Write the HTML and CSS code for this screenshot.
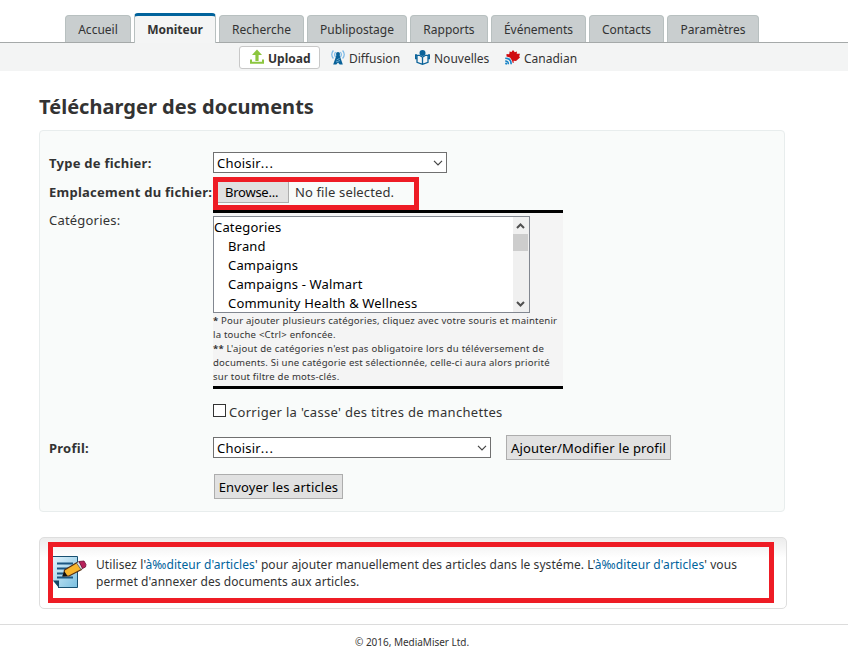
FILE: index.html
```html
<!DOCTYPE html>
<html lang="fr">
<head>
<meta charset="utf-8">
<title>Télécharger des documents</title>
<link rel="stylesheet" href="styles.css">
</head>
<body>
<nav class="tabs">
  <a class="tab t-accueil">Accueil</a>
  <a class="tab t-moniteur active">Moniteur</a>
  <a class="tab t-recherche">Recherche</a>
  <a class="tab t-publipostage">Publipostage</a>
  <a class="tab t-rapports">Rapports</a>
  <a class="tab t-evenements">Événements</a>
  <a class="tab t-contacts">Contacts</a>
  <a class="tab t-parametres">Paramètres</a>
</nav>
<nav class="subnav">
  <a class="sub selected">
    <svg width="14" height="16" viewBox="0 0 14 16"><path fill="#8cc63f" d="M7 0.500 12 6H8.600v6H5.400V6H2z"/><path fill="none" stroke="#8cc63f" stroke-width="2" d="M1 10.500v3.200h12v-3.200"/></svg>
    <span>Upload</span>
  </a>
  <a class="sub diffusion">
    <svg width="14" height="15" viewBox="0 0 14 15"><path fill="none" stroke="#7ab8e6" stroke-width="1.2" d="M2.400.500Q-.900 4.500 2.400 8.500M4.600 2Q2.700 4.500 4.600 7M11.600.500q3.300 4-0 8M9.400 2q1.900 2.500 0 5"/><circle cx="7" cy="4" r="2" fill="#0a6299"/><path fill="#0a6299" d="M5.500 5h3L11.800 14.500H8.700L7 12.500l-1.700 2H2.200z"/><path stroke="#8dc4e4" stroke-width=".7" d="m5.500 10 3-1.500M5 12l4-1.500"/></svg>
    <span>Diffusion</span>
  </a>
  <a class="sub nouvelles">
    <svg width="15" height="15" viewBox="0 0 15 15"><circle cx="7.500" cy="3" r="3" fill="#0a6299"/><path fill="none" stroke="#0a6299" stroke-width="1.300" d="M7.500 7.200 4.500 5.300H2v7l5.500 2 5.500-2v-7h-2.500zM7.500 7v7M2 8.500H.6V5H2M13 8.500h1.400V5H13"/></svg>
    <span>Nouvelles</span>
  </a>
  <a class="sub canadian">
    <svg width="15" height="15" viewBox="0 0 15 15"><path fill="#d00a10" d="M8 0 9.800 2.300 12 1.500l-.3 2.300L15 3.800l-.8 2.500.8 1.200-4 3.500-2.400-.2V13H7.800L7 10.500 5 7.500 1.500 6.500V4l2.500.3.500-1L4.500 1.500 6.500 2z"/><path fill="none" stroke="#1884c7" stroke-width="1.500" d="M.2 8.200q6 0 6 6M.2 11q3.200 0 3.200 3.200"/><circle cx="1.200" cy="13.600" r="1.100" fill="#1884c7"/></svg>
    <span>Canadian</span>
  </a>
</nav>
<main>
  <h1><span>Télécharger des documents</span></h1>
  <form class="panel">
    <div class="row type-row">
      <label class="bold">Type de fichier:</label>
      <div class="select type"><span>Choisir<i>...</i></span><svg width="10" height="6" viewBox="0 0 10 6"><path d="m1 .8 4 4 4-4"/></svg></div>
    </div>
    <div class="row file-row">
      <label class="bold file-label">Emplacement du fichier:</label>
      <div class="file"><span class="browse">Browse...</span><span class="nofile">No file selected.</span><div class="mark mark-file"></div></div>
    </div>
    <div class="row cat-row">
      <label>Catégories:</label>
      <div class="categories">
        <div class="list">
          <ul>
            <li class="root">Categories</li>
            <li>Brand</li>
            <li>Campaigns</li>
            <li>Campaigns - Walmart</li>
            <li>Community Health &amp; Wellness</li>
          </ul>
          <div class="scroll">
            <svg width="9" height="6" viewBox="0 0 9 6"><path d="m1 5 3.500-3.500L8 5"/></svg>
            <div class="thumb"></div>
            <svg width="9" height="6" viewBox="0 0 9 6"><path d="m1 1 3.500 3.500L8 1"/></svg>
          </div>
        </div>
        <p class="note"><b>*</b> Pour ajouter plusieurs catégories, cliquez avec votre souris et maintenir<br>la touche &lt;Ctrl&gt; enfoncée.<br><b>**</b> <span class="wide">L'ajout de catégories n'est pas obligatoire lors du téléversement de</span><br>documents. Si une catégorie est sélectionnée, celle-ci aura alors priorité<br>sur tout filtre de mots-clés.</p>
      </div>
    </div>
    <div class="row check-row">
      <span class="box"></span><span>Corriger la 'casse' des titres de manchettes</span>
    </div>
    <div class="row profile-row">
      <label class="bold">Profil:</label>
      <div class="select profile"><span>Choisir<i>...</i></span><svg width="10" height="6" viewBox="0 0 10 6"><path d="m1 .8 4 4 4-4"/></svg></div>
      <button type="button" class="edit">Ajouter/Modifier le profil</button>
    </div>
    <div class="row"><button type="button" class="send">Envoyer les articles</button></div>
  </form>
  <section class="info">
    <svg class="doc" width="34" height="34" viewBox="0 0 34 34">
      <defs><linearGradient id="paper" x1="0" y1="0" x2="1" y2="1"><stop offset="0" stop-color="#e2f3fb"/><stop offset="1" stop-color="#79bfe0"/></linearGradient></defs>
      <path fill="url(#paper)" d="M0 .5h24.500v31H6L0 25z"/>
      <path fill="none" stroke="#174f70" d="M0 .5h24.500v31H5"/>
      <path fill="#154766" d="M0 24.500h6v7.500z"/>
      <path stroke="#1b5680" stroke-width="2" d="M4 7.500h16M4 12.500h12M4 17.500h7M4 21.500h16"/>
      <path fill="#f7b52c" stroke="#573014" stroke-width="1.200" d="M11.500 14 24 6.500l4.500 7L16 20l-5.500 0z"/>
      <path fill="#111" d="m9 20.500 2.500-5 3 4.500z"/>
      <path fill="#d9dfe2" stroke="#555" stroke-width=".7" d="m23.500 7 2.500-1.500 4 6.500-2 1.500z"/>
      <path fill="#b8215a" stroke="#6e1236" stroke-width=".8" d="m26 5.500 5-.5 2 3.500-.5 2.500-3 1.500z"/>
    </svg>
    <p><span class="line1">Utilisez l'<a>à‰diteur d'articles</a>' pour ajouter manuellement des articles dans le systéme. L'<a>à‰diteur d'articles</a>' vous</span><br><span class="line2">permet d'annexer des documents aux articles.</span></p>
    <div class="mark mark-info"></div>
  </section>
</main>
<footer><span>© 2016, MediaMiser Ltd.</span></footer>
</body>
</html>
```

FILE: styles.css
```css
* { box-sizing: border-box; }
body { margin: 0; height: 665px; overflow: hidden; background: #fff; color: #333; font: 13px/18px "Noto Sans", "Open Sans", sans-serif; }
svg { display: block; flex: none; }
h1, p, ul { margin: 0; padding: 0; }
a { color: inherit; text-decoration: none; white-space: nowrap; }

.tabs { display: flex; align-items: flex-end; gap: 3px; height: 43px; padding-left: 65px; border-bottom: 1px solid #a5a9a9; font-size: 12px; }
.tab { display: flex; justify-content: center; height: 27px; padding-top: 5px; background: #c9cecf; border: 1px solid #b8c0c0; border-bottom: 0; border-radius: 4px 4px 0 0; }
.tab.active { height: 30px; margin-bottom: -1px; padding-top: 5px; background: #f4f5f5; border-top: 3px solid #00639c; font-weight: bold; }
.t-accueil { width: 66px; }
.t-moniteur { width: 82px; }
.t-recherche { width: 85px; }
.t-publipostage { width: 100px; }
.t-rapports { width: 78px; }
.t-evenements { width: 95px; }
.t-contacts { width: 75px; }
.t-parametres { width: 92px; }

.subnav { display: flex; height: 28px; padding: 3px 0 0 239px; background: #f3f4f4; font-size: 12px; }
.sub { display: flex; align-items: center; height: 24px; gap: 4px; }
.sub span { padding-top: 2px; }
.sub svg { margin-top: -1px; }
.selected { width: 81px; height: 23px; padding-left: 10px; gap: 4px; background: #fff; border: 1px solid #c8c8c8; border-radius: 3px; font-weight: bold; }
.diffusion { width: 85px; padding-left: 11px; }
.nouvelles { width: 89px; padding-left: 10px; }
.canadian { padding-left: 11px; }

main { width: 848px; padding: 23px 0 0 39px; }
h1 { height: 36px; font-size: 20px; line-height: 26px; letter-spacing: .03px; }
.panel { width: 746px; height: 382px; padding: 21px 0 0 9px; background: #f9fbfa; border: 1px solid #e8eded; border-radius: 4px; }
.row { display: flex; }
.row label { width: 164px; flex: none; white-space: nowrap; letter-spacing: .2px; }
.row .bold { font-weight: bold; letter-spacing: .25px; }
.type-row { height: 28px; }
.type-row label { padding-top: 2px; }
.file-row label { padding-top: 3px; }
.select { display: flex; justify-content: space-between; align-items: center; height: 21px; padding: 0 3px; background: #fff; border: 1px solid #707070; color: #000; letter-spacing: .2px; }
.select i { font-style: normal; letter-spacing: .8px; }
.select svg path { fill: none; stroke: #444; stroke-width: 1.2; }
.type { width: 234px; }
.profile { width: 278px; }
.file-row { height: 30px; }
.file { position: relative; display: flex; height: 23px; padding-left: 4px; margin-top: 1px; }
.browse { width: 72px; height: 22px; padding-left: 7px; background: #e1e1e1; border: 1px solid #adadad; color: #000; line-height: 20px; letter-spacing: -.25px; }
.nofile { padding-left: 6px; line-height: 23px; white-space: nowrap; letter-spacing: .13px; }
.mark { position: absolute; border: 5px solid #ee1c25; }
.mark-file { left: 0; top: -4px; width: 206px; height: 33px; }
.cat-row { height: 179px; }
.cat-row label { padding-top: 1px; }
.categories { width: 350px; height: 179px; padding-top: 3px; background: #f4f4f4; border-top: 3px solid #000; border-bottom: 3px solid #000; }
.list { display: flex; justify-content: space-between; width: 317px; height: 97px; background: #fff; border: 1px solid #828790; color: #000; overflow: hidden; letter-spacing: .17px; }
.list ul { list-style: none; padding-top: 1px; }
.list li { height: 19px; line-height: 19px; padding-left: 14px; white-space: nowrap; }
.list .root { padding-left: 0; }
.scroll { display: flex; flex-direction: column; align-items: center; width: 16px; padding: 6px 1px 5px 0; background: #f0f0f0; }
.scroll svg path { fill: none; stroke: #505050; stroke-width: 2; }
.scroll svg:last-child { margin-top: auto; }
.thumb { width: 15px; height: 17px; margin-top: 5px; background: #cdcdcd; }
.note { font-size: 9.600px; line-height: 14px; padding-top: 1px; white-space: nowrap; letter-spacing: .19px; }
.wide { letter-spacing: .26px; }
.check-row { height: 47px; padding: 14px 0 0 164px; gap: 3px; letter-spacing: .3px; }
.box { width: 13px; height: 13px; margin-top: 1px; background: #fff; border: 1px solid #333; }
.profile-row { height: 38px; }
.profile-row label { padding-top: 3px; }
.profile-row .select { margin-top: 1px; }
button { height: 25px; padding: 0; background: #e1e1e1; border: 1px solid #adadad; border-radius: 0; color: #000; font: inherit; letter-spacing: .16px; white-space: nowrap; }
.edit { width: 165px; margin: -1px 0 0 15px; }
.send { width: 129px; margin-left: 165px; }
.info { position: relative; display: flex; width: 748px; height: 72px; margin-top: 25px; padding: 18px 0 0 13px; background: linear-gradient(#ececec, #fff 20px); border: 1px solid #dedede; border-radius: 5px; }
.info p { margin-left: 9px; font-size: 12px; line-height: 17px; white-space: nowrap; letter-spacing: .075px; }
.info a { color: #00639c; }
.mark-info { left: 8px; top: 4px; width: 726px; height: 61px; }
footer { margin-top: 15px; padding: 9px 0 0 355px; border-top: 1px solid #dcdcdc; font-size: 10px; line-height: 16px; letter-spacing: -.02px; }
```
